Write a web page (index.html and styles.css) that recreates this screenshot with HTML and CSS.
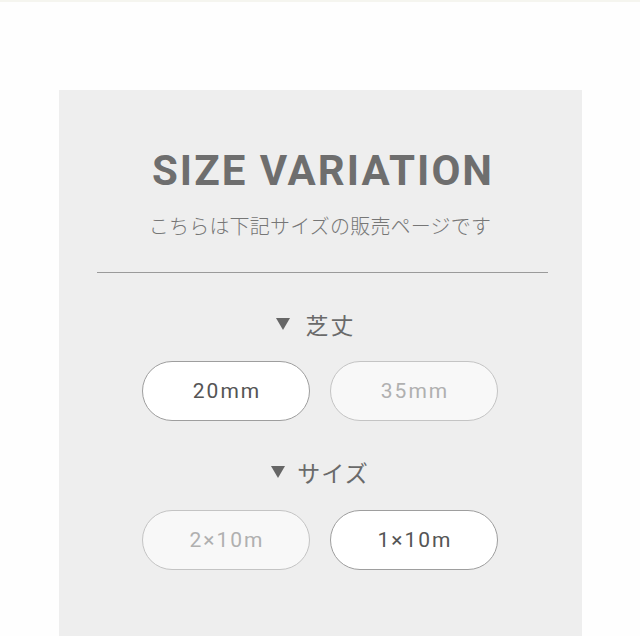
FILE: index.html
```html
<!DOCTYPE html>
<html lang="ja">
<head>
<meta charset="utf-8">
<link rel="stylesheet" href="styles.css">
</head>
<body>
<div class="topbar"></div>
<section class="panel">
  <h1 class="title">SIZE VARIATION</h1>
  <p class="lead">こちらは下記サイズの販売ページです</p>
  <hr class="divider">
  <div class="group">
    <h2 class="label label-1"><span class="tri"></span><span class="label-text">芝丈</span></h2>
    <div class="options">
      <a class="opt opt-active">20mm</a>
      <a class="opt opt-off">35mm</a>
    </div>
  </div>
  <div class="group group-2">
    <h2 class="label label-2"><span class="tri"></span><span class="label-text">サイズ</span></h2>
    <div class="options">
      <a class="opt opt-off">2×10m</a>
      <a class="opt opt-active">1×10m</a>
    </div>
  </div>
</section>
</body>
</html>
```
FILE: styles.css
```css
html, body {
  margin: 0;
  padding: 0;
  background: #fefefe;
  height: 100%;
  overflow: hidden;
}
.topbar {
  height: 2px;
  background: #f5f5ef;
}
.panel {
  width: 523px;
  margin: 88px auto 0;
  background: #eeeeee;
  padding: 60px 0 80px;
  box-sizing: border-box;
  min-height: 560px;
  font-family: "Noto Sans CJK JP", "Noto Sans", sans-serif;
}
.title {
  margin: 0;
  text-align: center;
  font-family: Roboto, "Noto Sans", sans-serif;
  font-weight: 700;
  font-size: 42px;
  line-height: 42px;
  letter-spacing: 2px;
  padding-left: 6px;
  color: #6e6e6e;
}
.lead {
  margin: 24px 0 0;
  text-align: center;
  font-size: 20px;
  font-weight: 300;
  line-height: 20px;
  color: #767676;
  letter-spacing: 0.2px;
}
.divider {
  width: 451px;
  margin: 36px 0 0 38px;
  border: 0;
  border-top: 1px solid #9a9a9a;
  height: 0;
}
.group {
  margin-top: 39px;
}
.group-2 {
  margin-top: 39px;
}
.label {
  margin: 0;
  display: flex;
  justify-content: center;
  align-items: center;
  font-weight: 400;
  font-size: 23px;
  line-height: 24px;
  color: #6a6a6a;
}
.tri {
  width: 0;
  height: 0;
  border-left: 7px solid transparent;
  border-right: 7px solid transparent;
  border-top: 12px solid #666;
}
.label-1 {
  gap: 16px;
}
.label-1 .label-text {
  letter-spacing: 2px;
  margin-right: 9px;
}
.label-2 {
  gap: 12px;
}
.label-2 .label-text {
  letter-spacing: 1px;
}
.options {
  display: grid;
  grid-template-columns: 168px 168px;
  justify-content: center;
  gap: 20px;
  margin-top: 25px;
}
.group-2 .options {
  margin-top: 26px;
}
.opt {
  height: 60px;
  box-sizing: border-box;
  border-radius: 30px;
  display: flex;
  align-items: center;
  justify-content: center;
  font-family: Roboto, "Noto Sans", sans-serif;
  font-size: 21px;
  letter-spacing: 2px;
  padding-left: 2px;
}
.opt-active {
  background: #ffffff;
  border: 1px solid #9e9e9e;
  color: #555555;
}
.opt-off {
  background: #f8f8f8;
  border: 1px solid #c4c4c4;
  color: #b0b0b0;
}
```
